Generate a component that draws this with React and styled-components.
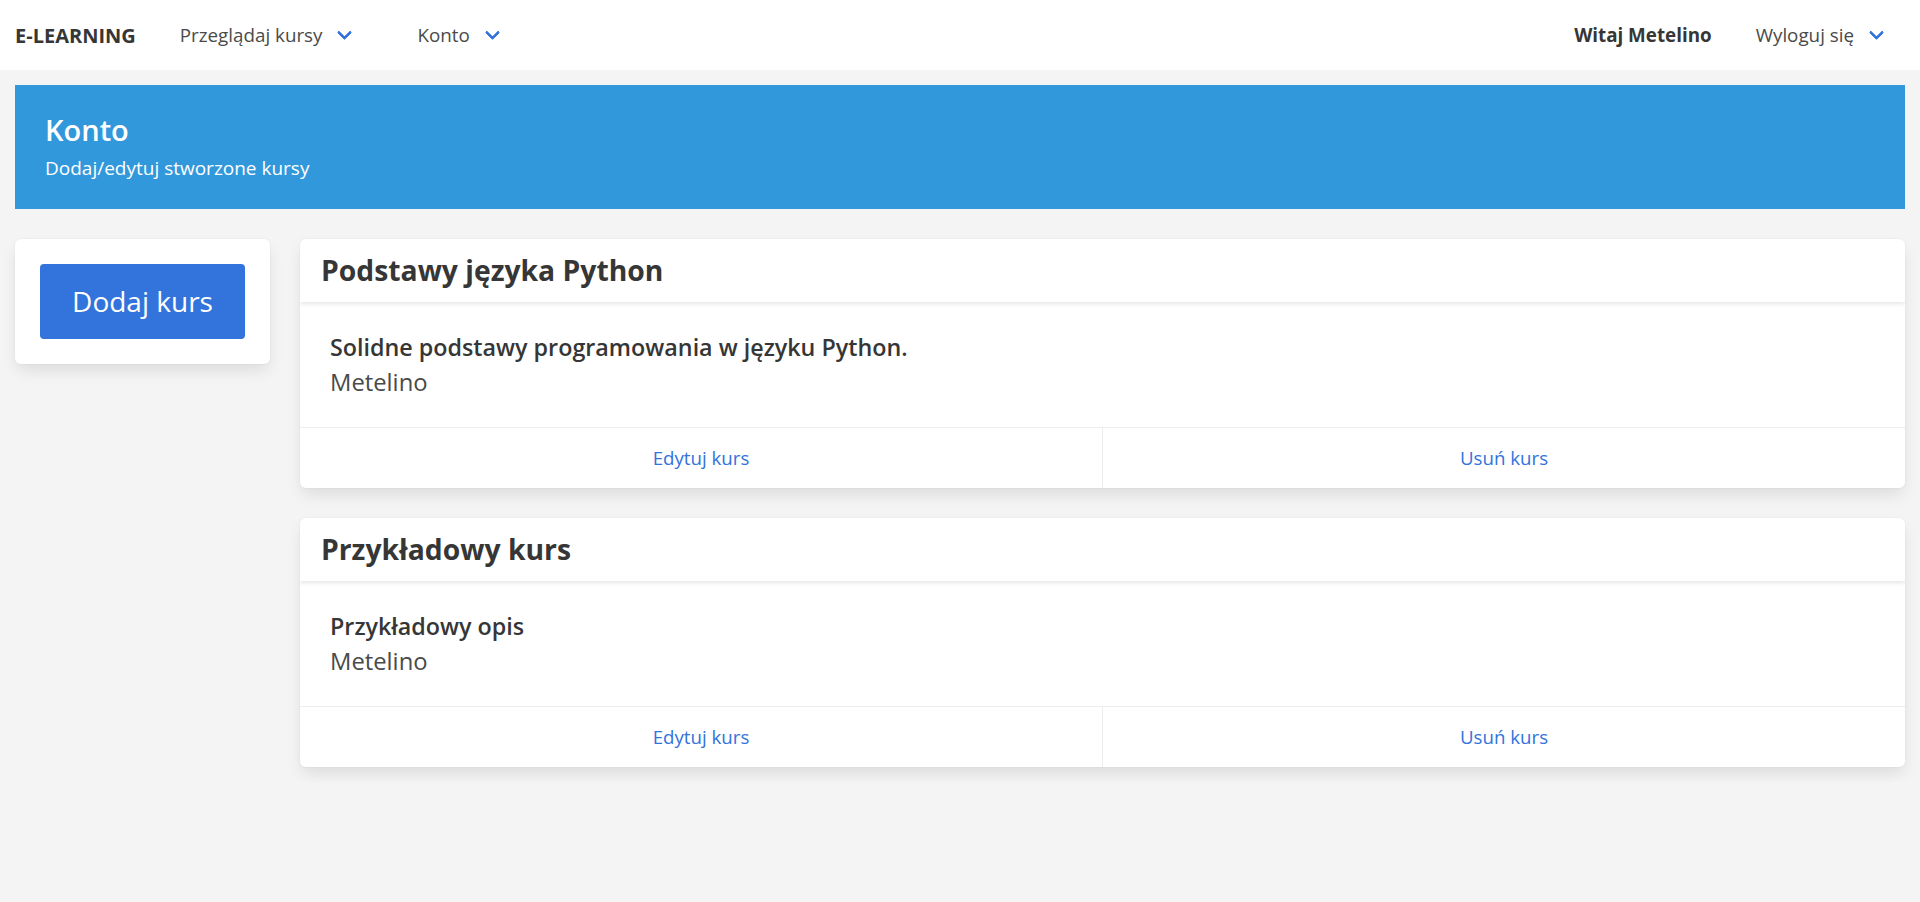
import React from 'react'
import styled, { createGlobalStyle } from 'styled-components'

const GlobalStyle = createGlobalStyle`
  * {
    box-sizing: border-box;
  }

  body {
    margin: 0;
    background: #f4f4f4;
    color: #4a4a4a;
    font-family: 'Open Sans', 'Noto Sans', sans-serif;
  }
`

const courses = [
  {
    id: 1,
    title: 'Podstawy języka Python',
    description: 'Solidne podstawy programowania w języku Python.',
    author: 'Metelino',
  },
  {
    id: 2,
    title: 'Przykładowy kurs',
    description: 'Przykładowy opis',
    author: 'Metelino',
  },
]

export default function App() {
  return (
    <>
      <GlobalStyle />
      <Navbar>
        <Brand>E-LEARNING</Brand>
        <NavItem>
          Przeglądaj kursy
          <Arrow />
        </NavItem>
        <NavItem>
          Konto
          <Arrow />
        </NavItem>
        <NavEnd>
          <NavItem bold>Witaj Metelino</NavItem>
          <NavItem last>
            Wyloguj się
            <Arrow last />
          </NavItem>
        </NavEnd>
      </Navbar>

      <Page>
        <Hero>
          <HeroTitle>Konto</HeroTitle>
          <HeroSubtitle>Dodaj/edytuj stworzone kursy</HeroSubtitle>
        </Hero>

        <Columns>
          <Sidebar>
            <SideBox>
              <AddButton>Dodaj kurs</AddButton>
            </SideBox>
          </Sidebar>

          <CourseList>
            {courses.map((course) => (
              <CourseCard key={course.id}>
                <CardHeader>
                  <CardTitle>{course.title}</CardTitle>
                </CardHeader>
                <CardContent>
                  <Description>{course.description}</Description>
                  <Author>{course.author}</Author>
                </CardContent>
                <CardFooter>
                  <FooterLink>Edytuj kurs</FooterLink>
                  <FooterLink>Usuń kurs</FooterLink>
                </CardFooter>
              </CourseCard>
            ))}
          </CourseList>
        </Columns>
      </Page>
    </>
  )
}

const Navbar = styled.nav`
  align-items: center;
  background: #ffffff;
  display: flex;
  height: 70px;
  padding-left: 15px;
`

const Brand = styled.div`
  color: #363636;
  font-size: 20px;
  font-weight: 700;
  padding-right: 22px;
`

const NavItem = styled.div`
  align-items: center;
  color: ${(props) => (props.bold ? '#363636' : '#4a4a4a')};
  cursor: pointer;
  display: flex;
  font-size: 18.8px;
  font-weight: ${(props) => (props.bold ? 700 : 400)};
  padding: 0 22px;
  padding-right: ${(props) => (props.last ? '0' : '22px')};
`

const NavEnd = styled.div`
  display: flex;
  margin-left: auto;
`

const Arrow = styled.span`
  border: 3px solid #3273dc;
  border-radius: 2px;
  border-right: 0;
  border-top: 0;
  display: inline-block;
  height: 11px;
  margin: -5px ${(props) => (props.last ? '38px' : '23px')} 0 17px;
  transform: rotate(-45deg);
  width: 11px;
`

const Page = styled.main`
  padding: 15px;
`

const Hero = styled.section`
  background: #3298dc;
  color: #ffffff;
  padding: 29px 30px 29px;
`

const HeroTitle = styled.h1`
  font-size: 29px;
  font-weight: 600;
  line-height: 1.125;
  margin: 0 0 9px;
`

const HeroSubtitle = styled.p`
  font-size: 19px;
  line-height: 24px;
  margin: 0;
`

const Columns = styled.div`
  align-items: flex-start;
  display: flex;
  gap: 30px;
  margin-top: 30px;
`

const Sidebar = styled.aside`
  flex: 0 0 255px;
`

const SideBox = styled.div`
  background: #ffffff;
  border-radius: 6px;
  box-shadow: 0 8px 16px -2px rgba(10, 10, 10, 0.1),
    0 0 0 1px rgba(10, 10, 10, 0.02);
  padding: 25px;
`

const AddButton = styled.button`
  background: #3273dc;
  border: none;
  border-radius: 4px;
  color: #ffffff;
  cursor: pointer;
  font-family: inherit;
  font-size: 28px;
  height: 75px;
  width: 100%;
`

const CourseList = styled.div`
  display: flex;
  flex: 1;
  flex-direction: column;
  gap: 30px;
`

const CourseCard = styled.div`
  background: #ffffff;
  border-radius: 6px;
  box-shadow: 0 8px 16px -2px rgba(10, 10, 10, 0.1),
    0 0 0 1px rgba(10, 10, 10, 0.02);
  overflow: hidden;
`

const CardHeader = styled.header`
  box-shadow: 0 2px 4px rgba(10, 10, 10, 0.1);
  padding: 14px 21px;
  position: relative;
`

const CardTitle = styled.h2`
  color: #363636;
  font-size: 28.3px;
  font-weight: 700;
  line-height: 35px;
  margin: 0;
`

const CardContent = styled.div`
  padding: 28px 30px 27px;
`

const Description = styled.p`
  color: #363636;
  font-size: 23.3px;
  font-weight: 600;
  line-height: 35px;
  margin: 0;
`

const Author = styled.p`
  color: #4a4a4a;
  font-size: 23.8px;
  line-height: 35px;
  margin: 0;
`

const CardFooter = styled.footer`
  border-top: 1px solid #ededed;
  display: flex;
`

const FooterLink = styled.a`
  align-items: center;
  color: #3273dc;
  cursor: pointer;
  display: flex;
  flex: 1;
  font-size: 18.7px;
  height: 60px;
  justify-content: center;

  & + & {
    border-left: 1px solid #ededed;
  }
`
